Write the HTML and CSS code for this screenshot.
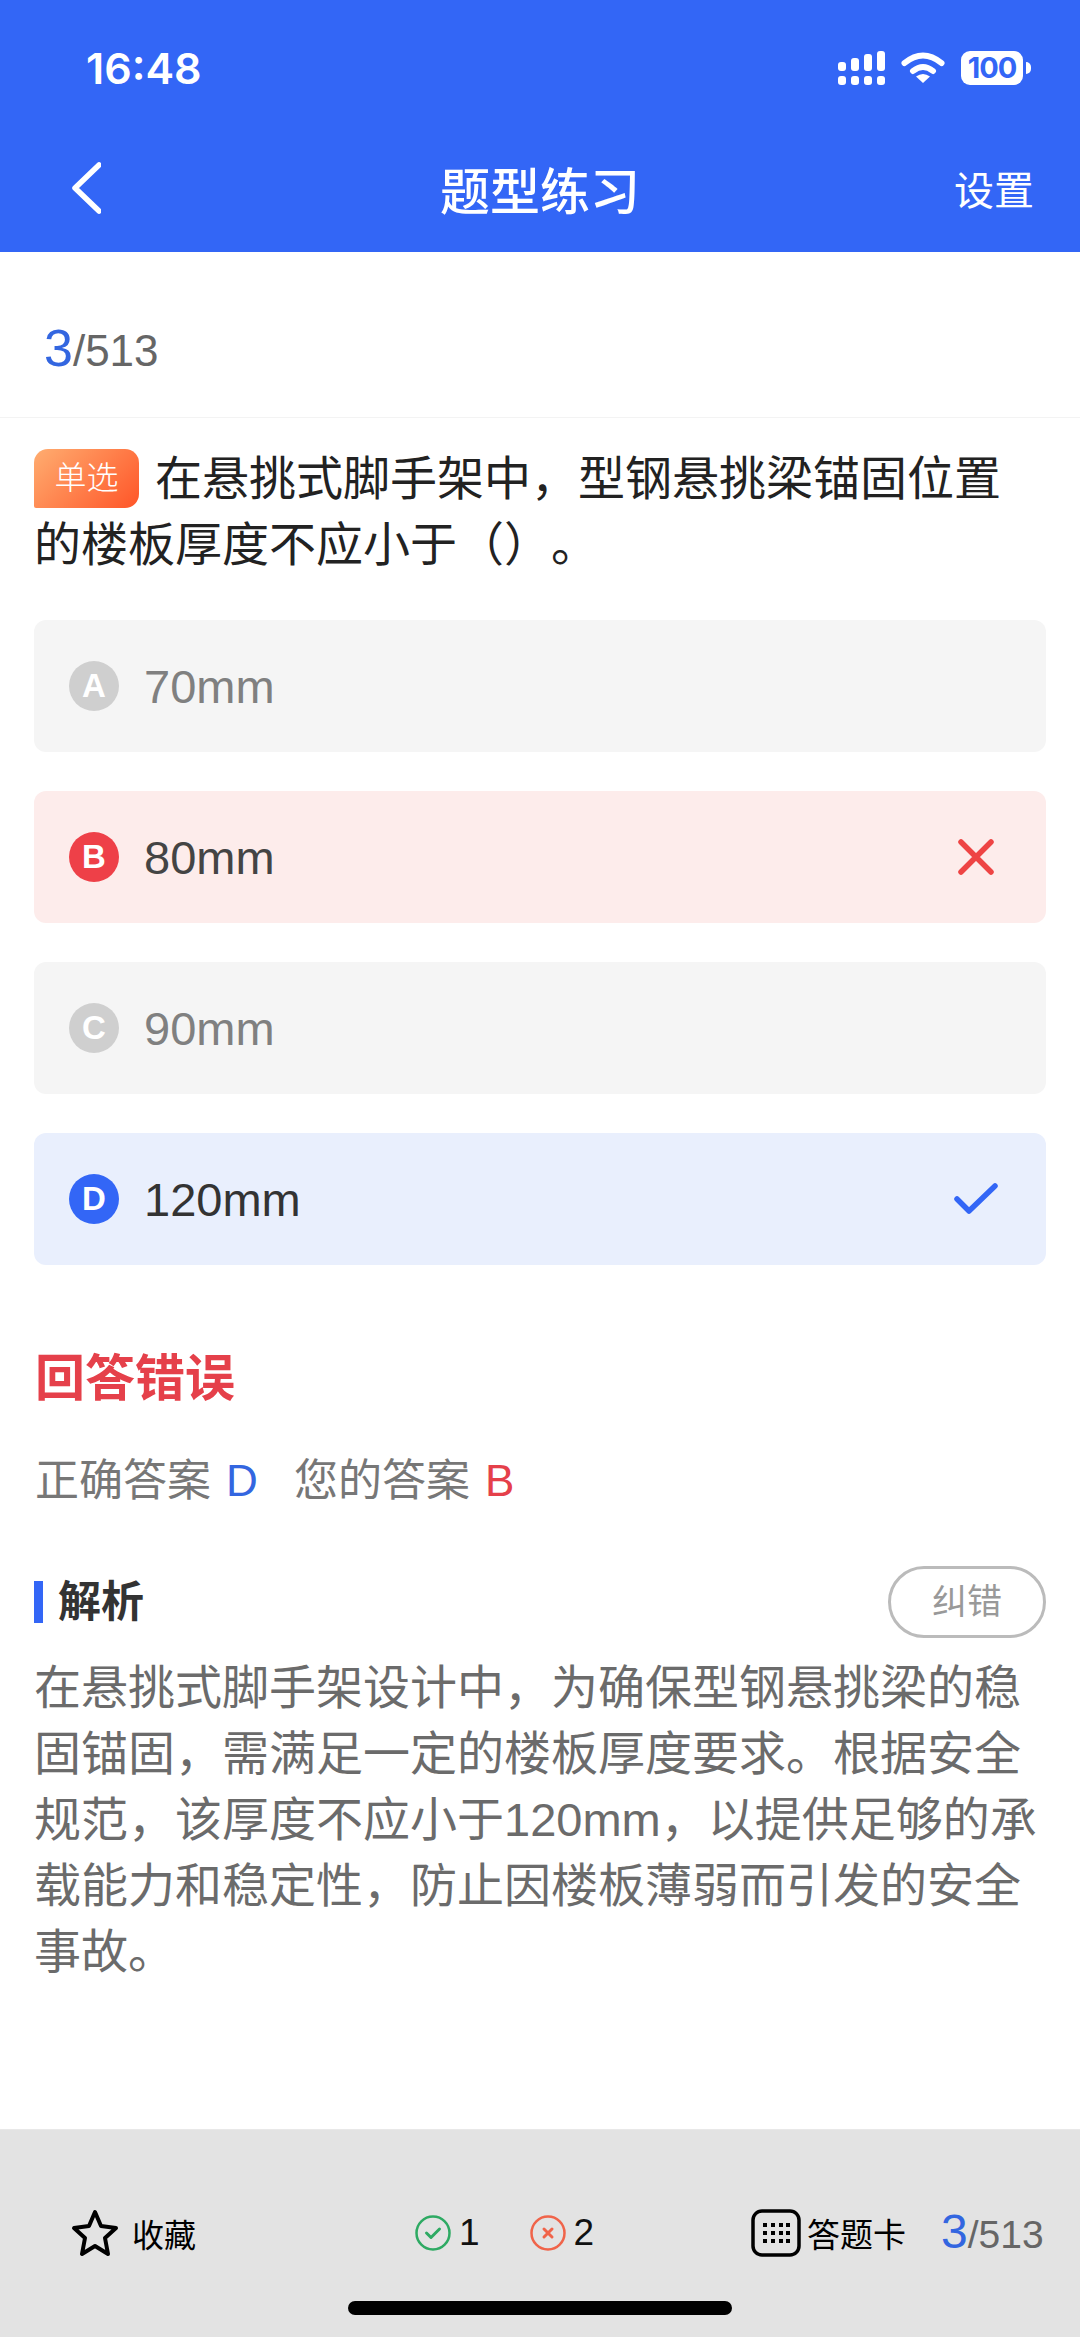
FILE: index.html
```html
<!DOCTYPE html>
<html lang="zh-CN">
<head>
    <meta charset="UTF-8">
    <meta name="viewport" content="width=device-width, initial-scale=1.0">
    <title>题型练习</title>
    <link rel="stylesheet" href="styles.css">
</head>
<body>
    <div class="page">
        <header class="header">
            <div class="status-bar">
                <span class="time">16:48</span>
                <div class="status-icons">
                    <svg class="signal" width="47" height="34" viewBox="0 0 47 34" fill="#fff">
                        <rect x="0" y="11" width="8" height="9" rx="3"/>
                        <rect x="13" y="7" width="8" height="13" rx="3"/>
                        <rect x="26" y="3" width="8" height="17" rx="3"/>
                        <rect x="39" y="0" width="8" height="20" rx="3"/>
                        <rect x="0" y="25" width="8" height="9" rx="3"/>
                        <rect x="13" y="25" width="8" height="9" rx="3"/>
                        <rect x="26" y="25" width="8" height="9" rx="3"/>
                        <rect x="39" y="25" width="8" height="9" rx="3"/>
                    </svg>
                    <svg class="wifi" width="44" height="32" viewBox="0 0 44 32" fill="none" stroke="#fff" stroke-width="6" stroke-linecap="round">
                        <path d="M3.500 11 Q22 -4 40.500 11"/>
                        <path d="M12 19 Q22 11 32 19"/>
                        <path d="M22 31 L15 24.500 Q22 19.500 29 24.500 Z" fill="#fff" stroke="none"/>
                    </svg>
                    <div class="battery">
                        <span class="battery-body">100</span>
                        <span class="battery-cap"></span>
                    </div>
                </div>
            </div>
            <nav class="nav">
                <svg class="back" width="30" height="52" viewBox="0 0 30 52" fill="none" stroke="#fff" stroke-width="5.500" stroke-linecap="round" stroke-linejoin="round">
                    <polyline points="28,3 4,26 28,49"/>
                </svg>
                <span class="nav-title">题型练习</span>
                <span class="nav-action">设置</span>
            </nav>
        </header>

        <main class="main">
            <div class="progress"><span class="progress-cur">3</span><span class="progress-total">/513</span></div>

            <div class="question">
                <span class="tag">单选</span>在悬挑式脚手架中，型钢悬挑梁锚固位置的楼板厚度不应小于（）。
            </div>

            <div class="options">
                <div class="option">
                    <span class="letter">A</span>
                    <span class="option-text">70mm</span>
                </div>
                <div class="option wrong">
                    <span class="letter">B</span>
                    <span class="option-text">80mm</span>
                    <svg class="mark mark-x" width="36" height="36" viewBox="0 0 36 36" fill="none" stroke="#ee4444" stroke-width="5.500" stroke-linecap="round">
                        <path d="M3 3 L33 33 M33 3 L3 33"/>
                    </svg>
                </div>
                <div class="option">
                    <span class="letter">C</span>
                    <span class="option-text">90mm</span>
                </div>
                <div class="option right">
                    <span class="letter">D</span>
                    <span class="option-text">120mm</span>
                    <svg class="mark" width="44" height="32" viewBox="0 0 44 32" fill="none" stroke="#3366f6" stroke-width="5.500" stroke-linecap="round" stroke-linejoin="round">
                        <polyline points="3,16 15,28 41,3"/>
                    </svg>
                </div>
            </div>

            <div class="verdict">回答错误</div>
            <div class="answers">
                <span>正确答案</span><span class="answer-val blue">D</span>
                <span class="answers-mine">您的答案</span><span class="answer-val red">B</span>
            </div>

            <div class="analysis-head">
                <div class="analysis-title">解析</div>
                <div class="report">纠错</div>
            </div>
            <p class="analysis">在悬挑式脚手架设计中，为确保型钢悬挑梁的稳固锚固，需满足一定的楼板厚度要求。根据安全规范，该厚度不应小于120mm，以提供足够的承载能力和稳定性，防止因楼板薄弱而引发的安全事故。</p>
        </main>

        <footer class="footer">
            <div class="footer-row">
                <div class="fav">
                    <svg width="48" height="48" viewBox="0 0 48 48" fill="none" stroke="#000" stroke-width="4" stroke-linejoin="round">
                        <polygon points="24,3 30,17 45,19 34,29 37,45 24,37 11,45 14,29 3,19 18,17"/>
                    </svg>
                    <span>收藏</span>
                </div>
                <div class="score">
                    <svg width="36" height="36" viewBox="0 0 36 36" fill="none" stroke="#2eaa63" stroke-width="2.500" stroke-linecap="round" stroke-linejoin="round">
                        <circle cx="18" cy="18" r="16.500"/>
                        <polyline points="11.500,18 16,22.500 24.500,14" stroke-width="3"/>
                    </svg>
                    <span class="score-num">1</span>
                    <svg class="score-bad" width="36" height="36" viewBox="0 0 36 36" fill="none" stroke="#f0644a" stroke-width="2.500" stroke-linecap="round">
                        <circle cx="18" cy="18" r="16.500"/>
                        <path d="M14 14 L22 22 M22 14 L14 22" stroke-width="3"/>
                    </svg>
                    <span class="score-num">2</span>
                </div>
                <div class="card">
                    <svg width="50" height="48" viewBox="0 0 50 48" fill="#000">
                        <rect x="2" y="2" width="46" height="44" rx="9" fill="none" stroke="#000" stroke-width="3.500"/>
                        <rect x="12" y="14" width="4" height="4"/><rect x="20" y="14" width="4" height="4"/><rect x="28" y="14" width="4" height="4"/><rect x="35" y="14" width="4" height="4"/>
                        <rect x="12" y="22" width="4" height="4"/><rect x="20" y="22" width="4" height="4"/><rect x="28" y="22" width="4" height="4"/><rect x="35" y="22" width="4" height="4"/>
                        <rect x="12" y="30" width="4" height="4"/><rect x="20" y="30" width="4" height="4"/><rect x="28" y="30" width="4" height="4"/><rect x="35" y="30" width="4" height="4"/>
                    </svg>
                    <span class="card-label">答题卡</span>
                    <div class="progress-small"><span class="progress-cur">3</span><span class="progress-total">/513</span></div>
                </div>
            </div>
            <div class="home-bar"></div>
        </footer>
    </div>
</body>
</html>
```

FILE: styles.css
```css
* {
    box-sizing: border-box;
}
html, body {
    margin: 0;
    padding: 0;
}
body {
    font-family: "Liberation Sans", "Noto Sans CJK SC", sans-serif;
    background-color: #fff;
    color: #222;
    text-spacing-trim: space-all;
}
.page {
    width: 1080px;
    height: 2337px;
    display: flex;
    flex-direction: column;
    overflow: hidden;
}

/* header */
.header {
    background-color: #3366f6;
    color: #fff;
    height: 252px;
}
.status-bar {
    height: 136px;
    display: flex;
    align-items: center;
    justify-content: space-between;
    padding: 0 49px 0 86px;
}
.time {
    font-family: Inter, "Liberation Sans", sans-serif;
    font-size: 43px;
    font-weight: 600;
}
.status-icons {
    display: flex;
    align-items: center;
}
.wifi {
    margin-left: 16px;
}
.battery {
    display: flex;
    align-items: center;
    margin-left: 16px;
}
.battery-body {
    width: 62px;
    height: 34px;
    border-radius: 9px;
    background-color: #fff;
    color: #3366f6;
    font-family: Inter, "Liberation Sans", sans-serif;
    font-size: 29px;
    font-weight: 700;
    line-height: 34px;
    text-align: center;
    letter-spacing: -1px;
}
.battery-cap {
    width: 5px;
    height: 12px;
    margin-left: 3px;
    background-color: #fff;
    border-radius: 0 6px 6px 0;
}
.nav {
    height: 104px;
    display: grid;
    grid-template-columns: 1fr auto 1fr;
    align-items: center;
}
.back {
    margin-left: 71px;
}
.nav-title {
    font-size: 50px;
    font-weight: 500;
}
.nav-action {
    font-size: 40px;
    justify-self: end;
    padding-right: 46px;
}

/* question */
.main {
    flex: 1;
}
.progress {
    height: 166px;
    padding-left: 44px;
    display: flex;
    align-items: baseline;
    padding-top: 66px;
    border-bottom: 1px solid #f3f3f3;
}
.progress-cur {
    color: #3366e0;
    font-size: 52px;
}
.progress-total {
    color: #666;
    font-size: 44px;
}
.question {
    padding: 28px 34px 0;
    font-size: 47px;
    line-height: 66px;
    color: #222;
}
.tag {
    display: inline-block;
    vertical-align: top;
    width: 105px;
    height: 59px;
    margin: 3px 16px 0 0;
    border-radius: 14px 14px 14px 2px;
    background: linear-gradient(135deg, #ffad70, #ff5528);
    color: #fff;
    font-size: 32px;
    line-height: 59px;
    text-align: center;
    font-weight: 300;
}
.options {
    padding: 42px 34px 0;
    display: flex;
    flex-direction: column;
    gap: 39px;
}
.option {
    height: 132px;
    border-radius: 12px;
    background-color: #f5f5f5;
    display: flex;
    align-items: center;
    padding: 0 48px 0 35px;
    color: #808080;
    font-size: 47px;
}
.letter {
    width: 50px;
    height: 50px;
    border-radius: 50%;
    background-color: #cfcfcf;
    color: #fff;
    font-size: 33px;
    font-weight: 700;
    line-height: 50px;
    text-align: center;
    margin-right: 25px;
}
.option-text {
    flex: 1;
}
.mark-x {
    margin-right: 4px;
}
.wrong {
    background-color: #fdeceb;
    color: #444;
}
.wrong .letter {
    background-color: #ee4048;
}
.right {
    background-color: #e9effd;
    color: #333;
}
.right .letter {
    background-color: #3366f6;
}

/* result */
.verdict {
    margin-top: 81px;
    padding-left: 35px;
    font-size: 50px;
    font-weight: 700;
    line-height: 66px;
    color: #e5404a;
}
.answers {
    margin-top: 39px;
    padding-left: 35px;
    font-size: 44px;
    line-height: 60px;
    color: #777;
}
.answers-mine {
    margin-left: 24px;
}
.answer-val {
    margin-left: 15px;
}
.blue {
    color: #3366e0;
}
.red {
    color: #e5404a;
}

/* analysis */
.analysis-head {
    margin-top: 55px;
    padding: 0 34px;
    display: flex;
    align-items: center;
    justify-content: space-between;
}
.analysis-title {
    border-left: 9px solid #3366f6;
    padding-left: 15px;
    height: 42px;
    line-height: 42px;
    font-size: 43px;
    font-weight: 700;
    color: #333;
}
.report {
    width: 158px;
    height: 72px;
    border: 3px solid #bbb;
    border-radius: 36px;
    color: #999;
    font-size: 35px;
    line-height: 66px;
    text-align: center;
}
.analysis {
    margin: 17px 0 0;
    padding: 0 34px;
    font-size: 47px;
    line-height: 66px;
    color: #6b6b6b;
}

/* bottom bar */
.footer {
    height: 208px;
    background-color: #e3e3e3;
    border-top: 1px solid #e8e8e8;
    padding-top: 79px;
}
.footer-row {
    height: 48px;
    padding-left: 71px;
    display: grid;
    grid-template-columns: 344px 336px 1fr;
    grid-template-rows: 48px;
    color: #000;
}
.fav, .score, .card {
    display: flex;
    align-items: center;
}
.fav span {
    margin-left: 13px;
    font-size: 32px;
}
.score-num {
    margin-left: 8px;
    font-size: 37px;
    color: #111;
}
.score-bad {
    margin-left: 50px;
}
.card-label {
    margin-left: 6px;
    font-size: 33px;
}
.progress-small {
    margin-left: 35px;
    display: flex;
    align-items: baseline;
    line-height: 48px;
}
.progress-small .progress-cur {
    font-size: 48px;
}
.progress-small .progress-total {
    font-size: 39px;
}
.home-bar {
    width: 384px;
    height: 14px;
    margin: 44px auto 0;
    border-radius: 7px;
    background-color: #000;
}
```
